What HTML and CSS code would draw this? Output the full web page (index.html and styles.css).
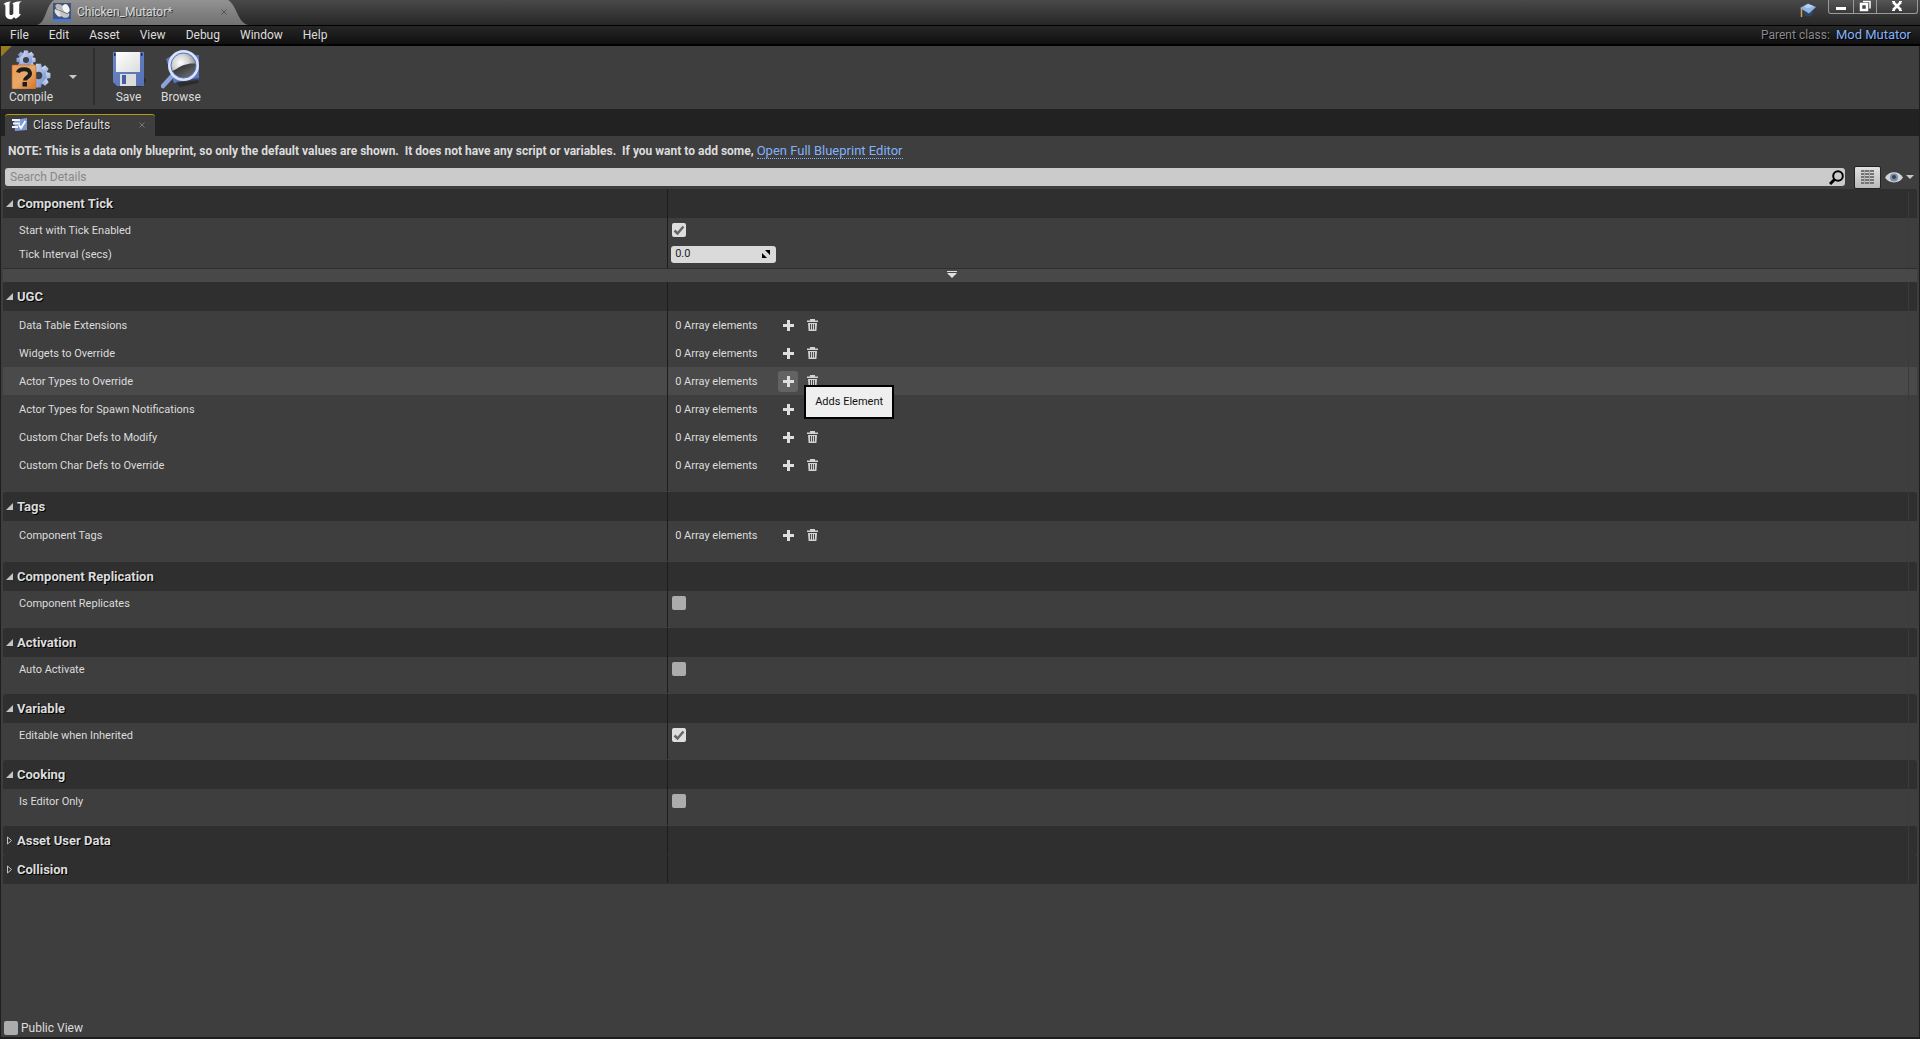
FILE: index.html
```html
<!DOCTYPE html>
<html lang="en">
<head>
<meta charset="utf-8">
<title>Chicken_Mutator</title>
<link rel="stylesheet" href="styles.css">
</head>
<body>
<svg class="defs" width="0" height="0" aria-hidden="true">
  <defs>
    <linearGradient id="gBlue" x1="0" y1="0" x2="1" y2="1"><stop offset="0" stop-color="#d3def5"/><stop offset="1" stop-color="#6f8bc9"/></linearGradient>
    <linearGradient id="gOrange" x1="0" y1="0" x2="1" y2="1"><stop offset="0" stop-color="#ef9a52"/><stop offset=".5" stop-color="#e8a869"/><stop offset="1" stop-color="#d1752a"/></linearGradient>
    <linearGradient id="gDisk" x1="0" y1="0" x2="1" y2="1"><stop offset="0" stop-color="#6d86c6"/><stop offset="1" stop-color="#5572b5"/></linearGradient>
    <linearGradient id="gPaper" x1="0" y1="0" x2="1" y2="1"><stop offset="0" stop-color="#fff"/><stop offset="1" stop-color="#dcdcdc"/></linearGradient>
    <radialGradient id="gGlass" cx=".4" cy=".4" r=".6"><stop offset="0" stop-color="#fff"/><stop offset=".5" stop-color="#d0d0d0"/><stop offset="1" stop-color="#777"/></radialGradient>
    <linearGradient id="gShade" x1="0" y1="0" x2="1" y2="1"><stop offset="0" stop-color="#222"/><stop offset="1" stop-color="#777"/></linearGradient>
    <symbol id="plus" viewBox="0 0 11 11"><path d="M4 0h3v4h4v3H7v4H4V7H0V4h4z" fill="#dedede"/></symbol>
    <symbol id="trash" viewBox="0 0 11 12"><path d="M3 1.500V0h5v1.500h3V3H0V1.500zM1 4h9l-.6 8H1.600z" fill="#d2d2d2"/><path d="M3.500 5v5.500M5.500 5v5.500M7.500 5v5.500" stroke="#4c4c4c" stroke-width="1" fill="none"/></symbol>
    <symbol id="open" viewBox="0 0 7 7"><path d="M7 0v7H0z" fill="#c4c4c4"/></symbol>
    <symbol id="closed" viewBox="0 0 6 9"><path d="M1 1l4 3.500L1 8z" fill="none" stroke="#c4c4c4"/></symbol>
    <symbol id="gear" viewBox="-10 -10 20 20"><g fill="url(#gBlue)"><circle r="7"/><path id="tooth" d="M-2-9.500h4l.8 3.500h-5.600zM-2 9.500h4l.8-3.500h-5.600z"/><use href="#tooth" transform="rotate(45)"/><use href="#tooth" transform="rotate(90)"/><use href="#tooth" transform="rotate(135)"/></g><circle r="3" fill="#3c3f47"/></symbol>
  </defs>
</svg>
<div class="window">
  <header class="titlebar">
    <svg class="logo" viewBox="0 0 20 20" width="20" height="20"><path d="M1 4.500C3 2.500 5 1.500 9 1.500c-1 .8-1.500 1.300-1.500 2.500v9.500c0 1 .7 1.500 1.500 1.500.8 0 1.700-.5 2.300-1V5c0-1.200-.6-1.500-1.300-1.200C12 2.300 14 1.700 20 1.300c-2 1-2.800 2-2.800 3.400v8.500c0 1 .5 1.300 1.800.6-1.200 2.500-3 4-5.200 4.900l-1.800-1.500-2.200 2c-4 .1-6.400-1.700-6.400-5V6.500C3.400 4.500 2.500 4 1 4.500z" fill="#fff"/></svg>
    <div class="doctab">
      <svg class="doctab-shape" viewBox="0 0 212 25" preserveAspectRatio="none"><defs><linearGradient id="gTab" x1="0" y1="0" x2="0" y2="1"><stop offset="0" stop-color="#929292"/><stop offset="1" stop-color="#717171"/></linearGradient></defs><path d="M0 25C9 23 9 5 17 0h174c9 5 9 22 20 25z" fill="url(#gTab)"/></svg>
      <svg class="doctab-icon" viewBox="0 0 18 18" width="18" height="18"><rect width="18" height="18" fill="#40557c"/><path d="M0 16h18v2H0z" fill="#3d79e8"/><ellipse cx="7" cy="4.500" rx="5" ry="3" transform="rotate(30 7 4.500)" fill="#b9b9b9"/><ellipse cx="5.500" cy="9.500" rx="4.500" ry="3" transform="rotate(50 5.500 9.500)" fill="#e2e2e2"/><ellipse cx="11.500" cy="11" rx="5" ry="3.500" transform="rotate(25 11.500 11)" fill="#c6c6c6"/><ellipse cx="13" cy="5.500" rx="3.200" ry="4.500" transform="rotate(-25 13 5.500)" fill="#f6f6f6"/><path d="M3 6l5 2M8 8l7 3" stroke="#6d7687"/></svg>
      <span class="doctab-title">Chicken_Mutator*</span>
      <button class="close" aria-label="Close tab"><svg viewBox="0 0 6 6" width="6" height="6"><path d="M.5.500l5 5M5.500.500l-5 5" stroke="#555"/></svg></button>
    </div>
    <div class="wincontrols">
      <svg class="tutorial" viewBox="0 0 16 16" width="16" height="16"><path d="M4 7v4c2 3 7 3.500 9 0V7z" fill="#304561"/><path d="M0 5l8-4.500L16 4l-7 6.500z" fill="#8fb4e4"/><path d="M4 4l4-3 6 2.500-6 1.500z" fill="#b9d1f0"/><path d="M1.500 5v9" stroke="#c9a063" stroke-width="1.500"/></svg>
      <div class="winbtns">
      <button aria-label="Minimize" class="w1"><svg viewBox="0 0 12 12" width="12" height="12"><path d="M1 7h10v3H1z" fill="#fff"/></svg></button>
      <button aria-label="Restore" class="w2"><svg viewBox="0 0 12 12" width="12" height="12"><path d="M2 4h6v6H2z" fill="none" stroke="#fff" stroke-width="2.500"/><path d="M4 1.500h7v7" fill="none" stroke="#fff" stroke-width="1.500"/></svg></button>
      <button aria-label="Close" class="w3"><svg viewBox="0 0 12 12" width="12" height="12"><path d="M2 2l8 8M10 2l-8 8" stroke="#fff" stroke-width="2.500"/><path d="M1 1.500h3M8 1.500h3M1 10.500h3M8 10.500h3" stroke="#fff"/></svg></button>
      </div>
    </div>
  </header>
  <nav class="menubar">
    <button>File</button><button>Edit</button><button>Asset</button><button>View</button><button>Debug</button><button>Window</button><button>Help</button>
    <div class="parent">Parent class: <a href="#">Mod Mutator</a></div>
  </nav>
  <div class="toolbar">
    <button class="tool compile">
      <svg viewBox="0 0 40 40" width="40" height="40"><use href="#gear" x="5" y="1" width="20" height="20"/><use href="#gear" x="15" y="14" width="25" height="25"/><rect x="1" y="16" width="24" height="24" rx="1" fill="url(#gOrange)" stroke="#b96a2a" stroke-width=".6"/><path d="M7 23.500c1-4 11-5 12 .5.600 4-5 4-5 7.500" fill="none" stroke="#1c1c1c" stroke-width="4"/><rect x="11.500" y="33" width="4.500" height="4.500" fill="#1c1c1c"/></svg>
      <span>Compile</span>
    </button>
    <button class="drop" aria-label="Compile options"><svg viewBox="0 0 8 4" width="8" height="4"><path d="M0 0h8L4 4z" fill="#c8c8c8"/></svg></button>
    <button class="tool save">
      <svg viewBox="0 0 40 40" width="40" height="40"><path d="M8 36l28-7 1 3-5 6z" fill="#222" opacity=".7"/><path d="M4 3h31v34H8l-4-4z" fill="url(#gDisk)"/><path d="M7 3h24v20H7z" fill="url(#gPaper)"/><path d="M5 4h1.500v3H5zM32 4h1.500v3H32z" fill="#1f2b52"/><rect x="11" y="25" width="16" height="12" fill="#dcdcdc"/><rect x="13" y="26" width="4" height="9" fill="#465fa3"/></svg>
      <span>Save</span>
    </button>
    <button class="tool browse">
      <svg viewBox="0 0 40 40" width="40" height="40"><path d="M5 10l5-3 28-1v25l-25 3z" fill="#5b76bb"/><path d="M15 33l23-4-1 5-18 4z" fill="#222" opacity=".6"/><path d="M12 26L2 37" stroke="#8ba3dc" stroke-width="4.500" stroke-linecap="round"/><circle cx="22.500" cy="16.500" r="14" fill="url(#gGlass)" stroke="#d8e3fb" stroke-width="3"/><path d="M11 22c4-1 6-4 12-6 4-1 8-2 12-1 1 13-15 20-24 7z" fill="url(#gShade)"/><circle cx="22.500" cy="16.500" r="12.500" fill="none" stroke="#5875bd" stroke-width="1"/></svg>
      <span>Browse</span>
    </button>
  </div>
  <div class="tabstrip">
    <div class="paneltab">
      <svg viewBox="0 0 15 13" width="15" height="13"><path d="M2 2l13-2v12L3 13z" fill="#7f9bd4"/><path d="M0 2h8M1 5.500h7M0 9h6" stroke="#eef3ff" stroke-width="2"/><path d="M7 7l2 3 4.500-7" stroke="#fff" stroke-width="1.800" fill="none"/></svg>
      <span>Class Defaults</span>
      <button class="close" aria-label="Close panel"><svg viewBox="0 0 6 6" width="6" height="6"><path d="M.5.500l5 5M5.500.500l-5 5" stroke="#777"/></svg></button>
    </div>
  </div>
  <main class="panel">
    <p class="note"><b>NOTE: This is a data only blueprint, so only the default values are shown.&nbsp; It does not have any script or variables.&nbsp; If you want to add some,</b> <a href="#">Open Full Blueprint Editor</a></p>
    <div class="searchrow">
      <div class="search">
        <input type="text" placeholder="Search Details" aria-label="Search Details">
        <svg viewBox="0 0 15 15" width="15" height="15"><circle cx="9" cy="6" r="4.800" fill="none" stroke="#000" stroke-width="2"/><path d="M6 9l-5 5" stroke="#000" stroke-width="3"/></svg>
      </div>
      <button class="matrix" aria-label="Property matrix"><svg viewBox="0 0 13 14" width="13" height="14"><path d="M0 1h13M0 4h13M0 7h13M0 10h13M0 13h13" stroke="#747474" stroke-width="2"/><path d="M3.500 0v14M8.500 0v14" stroke="#aaa" stroke-width="1"/></svg></button>
      <button class="eye" aria-label="View options"><svg viewBox="0 0 18 11" width="18" height="11"><path d="M0 5.500C4-1.500 14-1.500 18 5.500 14 12 4 12 0 5.500z" fill="#d3d3d3"/><circle cx="9" cy="5.500" r="4" fill="#7b8ca8"/><circle cx="9" cy="5" r="2" fill="#34415a"/></svg><svg viewBox="0 0 8 4" width="8" height="4"><path d="M0 0h8L4 4z" fill="#c8c8c8"/></svg></button>
    </div>
    <div class="details">
      <section>
        <h2><svg width="7" height="7"><use href="#open"/></svg>Component Tick</h2>
        <div class="row"><label for="tick">Start with Tick Enabled</label><div class="val"><input type="checkbox" id="tick" checked></div></div>
        <div class="row"><label for="interval">Tick Interval (secs)</label><div class="val"><span class="spin"><input type="text" id="interval" value="0.0"><svg viewBox="0 0 8 8" width="8" height="8"><path d="M3 0h5v5zM0 3v5h5z" fill="#000"/></svg></span></div></div>
        <button class="advanced" aria-label="Show advanced"><svg viewBox="0 0 10 7" width="10" height="7"><path d="M0 0h10v1H0zM0 2h10L5 7z" fill="#e0e0e0"/></svg></button>
      </section>
      <section>
        <h2><svg width="7" height="7"><use href="#open"/></svg>UGC</h2>
        <div class="row array"><span class="name">Data Table Extensions</span><div class="val"><span class="count">0 Array elements</span><button aria-label="Add"><svg width="11" height="11"><use href="#plus"/></svg></button><button aria-label="Clear"><svg width="11" height="12"><use href="#trash"/></svg></button></div></div>
        <div class="row array"><span class="name">Widgets to Override</span><div class="val"><span class="count">0 Array elements</span><button aria-label="Add"><svg width="11" height="11"><use href="#plus"/></svg></button><button aria-label="Clear"><svg width="11" height="12"><use href="#trash"/></svg></button></div></div>
        <div class="row array hovered"><span class="name">Actor Types to Override</span><div class="val"><span class="count">0 Array elements</span><button class="hot" aria-label="Add"><svg width="11" height="11"><use href="#plus"/></svg></button><button aria-label="Clear"><svg width="11" height="12"><use href="#trash"/></svg></button><div class="tooltip" role="tooltip">Adds Element</div></div></div>
        <div class="row array"><span class="name">Actor Types for Spawn Notifications</span><div class="val"><span class="count">0 Array elements</span><button aria-label="Add"><svg width="11" height="11"><use href="#plus"/></svg></button><button aria-label="Clear"><svg width="11" height="12"><use href="#trash"/></svg></button></div></div>
        <div class="row array"><span class="name">Custom Char Defs to Modify</span><div class="val"><span class="count">0 Array elements</span><button aria-label="Add"><svg width="11" height="11"><use href="#plus"/></svg></button><button aria-label="Clear"><svg width="11" height="12"><use href="#trash"/></svg></button></div></div>
        <div class="row array"><span class="name">Custom Char Defs to Override</span><div class="val"><span class="count">0 Array elements</span><button aria-label="Add"><svg width="11" height="11"><use href="#plus"/></svg></button><button aria-label="Clear"><svg width="11" height="12"><use href="#trash"/></svg></button></div></div>
        <div class="foot"></div>
      </section>
      <section>
        <h2><svg width="7" height="7"><use href="#open"/></svg>Tags</h2>
        <div class="row array"><span class="name">Component Tags</span><div class="val"><span class="count">0 Array elements</span><button aria-label="Add"><svg width="11" height="11"><use href="#plus"/></svg></button><button aria-label="Clear"><svg width="11" height="12"><use href="#trash"/></svg></button></div></div>
        <div class="foot"></div>
      </section>
      <section>
        <h2><svg width="7" height="7"><use href="#open"/></svg>Component Replication</h2>
        <div class="row"><label for="repl">Component Replicates</label><div class="val"><input type="checkbox" id="repl"></div></div>
        <div class="foot"></div>
      </section>
      <section>
        <h2><svg width="7" height="7"><use href="#open"/></svg>Activation</h2>
        <div class="row"><label for="auto">Auto Activate</label><div class="val"><input type="checkbox" id="auto"></div></div>
        <div class="foot"></div>
      </section>
      <section>
        <h2><svg width="7" height="7"><use href="#open"/></svg>Variable</h2>
        <div class="row"><label for="edit">Editable when Inherited</label><div class="val"><input type="checkbox" id="edit" checked></div></div>
        <div class="foot"></div>
      </section>
      <section>
        <h2><svg width="7" height="7"><use href="#open"/></svg>Cooking</h2>
        <div class="row"><label for="editor">Is Editor Only</label><div class="val"><input type="checkbox" id="editor"></div></div>
        <div class="foot"></div>
      </section>
      <section><h2><svg width="7" height="9"><use href="#closed"/></svg>Asset User Data</h2></section>
      <section><h2><svg width="7" height="9"><use href="#closed"/></svg>Collision</h2></section>
    </div>
    <div class="public"><input type="checkbox" id="public"><label for="public">Public View</label></div>
  </main>
</div>
</body>
</html>
```
FILE: styles.css
```css
* { box-sizing: border-box; }
body {
  margin: 0;
  background: #1e1e1e;
  color: #dcdcdc;
  font: 12px/16px Roboto, "Liberation Sans", sans-serif;
}
button {
  margin: 0;
  padding: 0;
  border: 0;
  background: none;
  color: inherit;
  font: inherit;
}
svg { display: block; flex: none; }
.defs { position: absolute; }
a { color: #83b1fb; font-size: 13px; text-decoration: none; }

.window {
  display: flex;
  flex-direction: column;
  min-height: 100vh;
  padding: 0 1px 2px;
}

.titlebar {
  display: flex;
  height: 26px;
  margin: 0 -1px;
  padding-left: 1px;
  background: linear-gradient(#494949, #272727);
  border-bottom: 1px solid #000;
}
.logo { margin: 0 15px 0 1px; }
.doctab {
  position: relative;
  display: flex;
  align-items: center;
  width: 212px;
  padding: 0 22px 2px 16px;
  color: #dadada;
  text-shadow: 1px 1px 0 #333;
}
.doctab-shape {
  position: absolute;
  inset: 0;
  width: 100%;
  height: 100%;
}
.doctab-icon, .doctab-title, .doctab .close { position: relative; }
.doctab-title { margin: 0 auto 0 6px; }
.wincontrols { display: flex; margin-left: auto; gap: 12px; }
.tutorial { margin-top: 3px; }
.winbtns {
  display: flex;
  height: 14px;
  margin-right: 2px;
  border: solid #9a9a9a;
  border-width: 0 1px 1px;
  border-radius: 0 0 3px 3px;
  background: linear-gradient(#565656, #3a3a3a);
}
.winbtns button { display: flex; justify-content: center; }
.winbtns .w1 { width: 24px; }
.winbtns .w2 { width: 24px; border: solid #9a9a9a; border-width: 0 1px; }
.winbtns .w3 { width: 40px; }

.menubar {
  display: flex;
  align-items: center;
  height: 20px;
  gap: 20px;
  padding: 0 9px 0 10px;
  margin: 0 -1px;
  background: linear-gradient(#262626, #101010);
  border-bottom: 2px solid #000;
  text-shadow: 1px 1px 0 #000;
}
.parent { margin-left: auto; color: #8a8a8a; }
.parent a { margin-left: 3px; }

.toolbar {
  display: flex;
  height: 63px;
  background: linear-gradient(135deg, #9a7a1c 7px, #3e3e3e 8px);
  text-shadow: 1px 1px 0 #111;
}
.tool {
  display: flex;
  flex-direction: column;
  align-items: center;
  padding-top: 3px;
}
.compile { width: 60px; }
.drop { width: 24px; display: flex; justify-content: center; padding-top: 29px; }
.save { width: 65px; margin: 2px 0 4px 8px; padding: 1px 0 0 4px; border-left: 2px solid #2e2e2e; }
.browse { width: 46px; }

.tabstrip { display: flex; height: 27px; padding: 5px 4px 0; background: #222; }
.paneltab {
  display: flex;
  align-items: center;
  width: 150px;
  padding: 0 10px 2px 7px;
  gap: 6px;
  background: #3e3e3e;
  border-top: 1px solid #b39a12;
  border-radius: 3px 3px 0 0;
  text-shadow: 1px 1px 0 #111;
}
.paneltab .close { margin-left: auto; }

.panel {
  display: flex;
  flex: 1;
  flex-direction: column;
  background: #3e3e3e;
}
.note { margin: 6px 7px 8px; line-height: 18px; }
.note a { border-bottom: 1px dotted #83b1fb; }

.searchrow {
  display: flex;
  align-items: center;
  height: 22px;
  margin: -2px 4px 1px;
}
.search {
  display: flex;
  flex: 1;
  align-items: center;
  height: 18px;
  padding-right: 1px;
  border-radius: 3px;
  background: #cbcbcb;
}
.search input {
  flex: 1;
  padding: 0 5px;
  border: 0;
  outline: 0;
  background: none;
  font: inherit;
}
.search input::placeholder { color: #888; }
.matrix {
  display: grid;
  place-items: center;
  width: 27px;
  height: 23px;
  margin-left: 9px;
  border: 1px solid #222;
  border-radius: 2px;
  background: linear-gradient(#e0e0e0, #bababa);
}
.eye { display: flex; align-items: center; gap: 3px; margin: 0 1px 0 4px; }

.details {
  position: relative;
  margin: 0 2px;
  font-size: 11px;
}
/* edge of the scroll gutter */
.details::after {
  content: "";
  position: absolute;
  right: 8px;
  top: 2px;
  bottom: 2px;
  width: 1px;
  background: #3a3a3a;
}
h2 {
  display: flex;
  align-items: center;
  gap: 4px;
  height: 29px;
  margin: 0;
  padding-left: 3px;
  border-radius: 3px 3px 0 0;
  background: #2f2f2f;
  font-size: 13px;
  text-shadow: 1px 1px 0 #000;
}
section { position: relative; }
/* the column splitter runs through headings and rows alike */
section::after {
  content: "";
  position: absolute;
  left: 34.700%;
  top: 0;
  bottom: 1px;
  width: 1px;
  background: #1c1c1c;
}
.row {
  display: flex;
  align-items: center;
  height: 24px;
}
.row > label, .name { width: 34.700%; padding: 1px 0 0 16px; }
.array { height: 28px; }
.hovered { background: #4a4a4a; }
.val { position: relative; display: flex; align-items: center; flex: 1; padding-left: 5px; }
.array .val { padding-left: 8px; }
.count { width: 103px; padding-top: 1px; }
.array button {
  display: grid;
  place-items: center;
  width: 20px;
  height: 21px;
  border-radius: 3px;
}
.array button + button { margin-left: 4px; }
.array .hot { background: #636363; }
.foot { height: 13px; }

input[type="checkbox"] {
  appearance: none;
  width: 14px;
  height: 14px;
  margin: 0;
  border-radius: 2px;
  background: #acacac;
}
input[type="checkbox"]:checked {
  background: #dedede url("data:image/svg+xml,%3Csvg xmlns='http://www.w3.org/2000/svg' viewBox='0 0 14 14'%3E%3Cpath d='M2.500 7.500l3 3 6-7' fill='none' stroke='%23666' stroke-width='2.500'/%3E%3C/svg%3E");
}
.spin {
  display: flex;
  align-items: center;
  width: 105px;
  height: 17px;
  margin-left: -1px;
  padding-right: 6px;
  border-radius: 3px;
  background: #dadada;
}
.spin input {
  flex: 1;
  min-width: 0;
  padding: 0 4px;
  border: 0;
  background: none;
  color: #222;
  font: inherit;
}
.advanced {
  position: relative;
  z-index: 1;
  display: flex;
  justify-content: center;
  width: 100%;
  height: 14px;
  margin-top: 2px;
  padding: 2px 16px 0 0;
  border-top: 1px solid #2e2e2e;
  background: #484848;
}
.tooltip {
  position: absolute;
  z-index: 2;
  left: 137px;
  top: 14px;
  padding: 7px 9px;
  border: 2px solid #000;
  background: #efefef;
  color: #111;
  white-space: nowrap;
}
.public {
  display: flex;
  align-items: center;
  gap: 3px;
  margin-top: auto;
  padding: 0 3px 1px;
}
```
